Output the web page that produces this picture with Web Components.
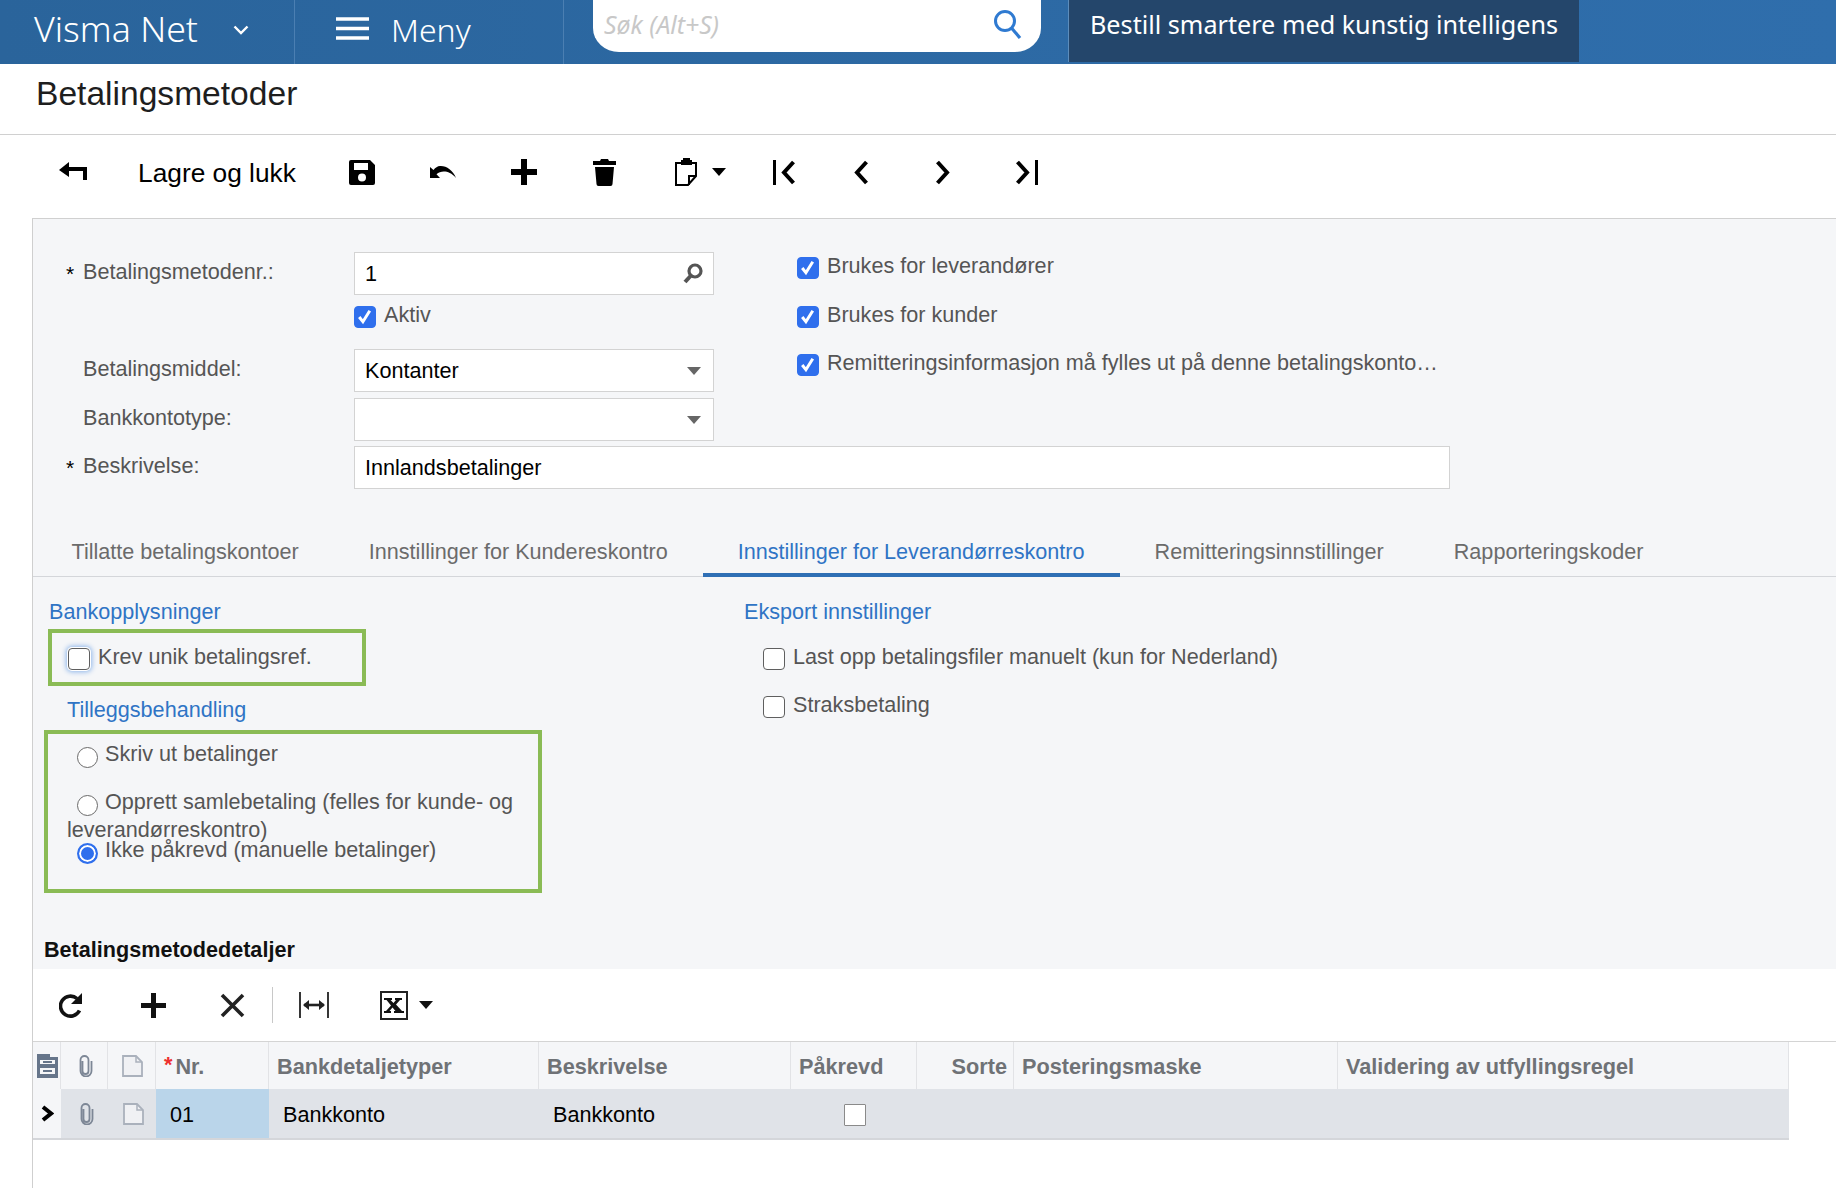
<!DOCTYPE html>
<html lang="no">
<head>
<meta charset="utf-8">
<title>Betalingsmetoder</title>
<style>
  html, body { margin: 0; padding: 0; background: #fff; }
  body { width: 1836px; height: 1188px; overflow: hidden; font-family: "Liberation Sans", Arial, sans-serif; font-size: 21.6px; }
</style>
</head>
<body>
<visma-header></visma-header>
<page-title>Betalingsmetoder</page-title>
<main-toolbar></main-toolbar>
<screen-body>
  <form-panel></form-panel>
  <tab-bar></tab-bar>
  <detail-section></detail-section>
  <grid-toolbar></grid-toolbar>
  <data-grid></data-grid>
</screen-body>

<script>
class VismaHeader extends HTMLElement {
    connectedCallback() {
        this.attachShadow({ mode: 'open' });
        this.shadowRoot.innerHTML = `
            <style>
                :host {
                    display: flex;
                    height: 64px;
                    background: linear-gradient(90deg, #2a649b, #2f6eac);
                    color: #fff;
                    font-family: "Noto Sans", sans-serif;
                }
                .cell { display: flex; align-items: center; border-right: 1px solid #4b7fb2; }
                .brand { width: 295px; padding-left: 34px; box-sizing: border-box; font-size: 35.700px; font-weight: 300; white-space: nowrap; }
                .brand span { margin-top: -9px; }
                .brand svg { margin-left: 35px; margin-top: -4px; }
                .menu { width: 269px; padding-left: 41px; box-sizing: border-box; font-size: 32px; font-weight: 300; }
                .menu svg { margin-right: 22px; margin-top: -7px; }
                .menu span { margin-top: -5px; }
                .search {
                    margin: 0 27px 12px 29px;
                    width: 448px;
                    height: 52px;
                    background: #fff;
                    border-radius: 0 0 26px 26px / 0 0 24px 24px;
                    display: flex;
                    align-items: center;
                    justify-content: space-between;
                    padding: 0 18px 0 11px;
                    box-sizing: border-box;
                    color: #c8c8c8;
                    font-style: italic;
                    font-size: 24.800px;
                }
                .search span { margin-top: -4px; }
                .search svg { margin-top: -4px; }
                .promo {
                    height: 62px;
                    background: #24466b;
                    border-left: 1px solid #5d8dbb;
                    padding: 0 21px;
                    font-size: 25.200px;
                    line-height: 48px;
                    white-space: nowrap;
                }
            </style>
            <div class="cell brand"><span>Visma Net</span>
                <svg width="16" height="10" viewBox="0 0 16 10"><path d="M1.500 1.500 8 8l6.500-6.500" fill="none" stroke="#fff" stroke-width="2.400"/></svg>
            </div>
            <div class="cell menu">
                <svg width="33" height="23" viewBox="0 0 33 23"><path d="M0 2h33M0 11.500h33M0 21h33" stroke="#fff" stroke-width="3.400"/></svg>
                <span>Meny</span>
            </div>
            <div class="search">
                <span>Søk (Alt+S)</span>
                <svg width="30" height="30" viewBox="0 0 30 30"><circle cx="12" cy="12" r="9.500" fill="none" stroke="#2f7ad1" stroke-width="3"/><path d="M18.500 19 27 29" stroke="#2f7ad1" stroke-width="3.200"/></svg>
            </div>
            <div class="promo">Bestill smartere med kunstig intelligens</div>
        `;
    }
}

class PageTitle extends HTMLElement {
    connectedCallback() {
        this.attachShadow({ mode: 'open' });
        this.shadowRoot.innerHTML = `
            <style>
                :host {
                    display: block;
                    height: 71px;
                    box-sizing: border-box;
                    padding: 10px 0 0 36px;
                    border-bottom: 1px solid #d0d0d0;
                    font-size: 33.600px;
                    line-height: 40px;
                    color: #1e1e1e;
                }
            </style>
            <slot></slot>
        `;
    }
}

class MainToolbar extends HTMLElement {
    connectedCallback() {
        this.attachShadow({ mode: 'open' });
        this.shadowRoot.innerHTML = `
            <style>
                :host {
                    display: flex;
                    align-items: center;
                    height: 83px;
                    padding: 0 0 9px 59px;
                    box-sizing: border-box;
                    color: #000;
                }
                svg { display: block; flex: none; }
                .save-close { margin: 2px 53px 0 51px; font-size: 26.300px; white-space: nowrap; }
            </style>
            <svg width="28" height="20" viewBox="0 0 28 20"><path d="M0 8 10 0v5h18v13h-4V9H10v6z"/></svg>
            <span class="save-close">Lagre og lukk</span>
            <svg width="26" height="25" viewBox="0 0 26 25"><path fill-rule="evenodd" d="M2 0h19l5 5v18a2 2 0 0 1-2 2H2a2 2 0 0 1-2-2V2a2 2 0 0 1 2-2zM5 3v7h14V3zM13 13.500a4 4 0 1 0 0 8 4 4 0 0 0 0-8z"/></svg>
            <svg style="margin-left:54px" width="28" height="16" viewBox="0 0 28 16"><path d="M1 3v11h10l-3.500-3.800C12 6.500 20 6 27 14 24 6 17 1.500 11 2 8.500 2.200 6.500 3.500 4.500 6z"/></svg>
            <svg style="margin-left:54px" width="26" height="26" viewBox="0 0 26 26"><path d="M10 0h6v10h10v6H16v10h-6V16H0v-6h10z"/></svg>
            <svg style="margin-left:56px" width="23" height="27" viewBox="0 0 23 27"><path d="M8 0h7l1 2h7v4H0V2h7zM2 8h19l-1.500 17a2 2 0 0 1-2 2h-12a2 2 0 0 1-2-2z"/></svg>
            <svg style="margin-left:59px" width="23" height="28" viewBox="0 0 23 28"><path fill="none" stroke="#000" stroke-width="2" d="M6 5H1v22h12l8-9V5h-4M14 27v-9h7"/><path d="M8 2V0h7v2h2v5H6V2z"/></svg>
            <svg style="margin-left:14px" width="14" height="8" viewBox="0 0 14 8"><path d="M0 0h14L7 8z"/></svg>
            <svg style="margin-left:47px" width="23" height="25" viewBox="0 0 23 25"><path d="M1.500 0v25" stroke="#000" stroke-width="3"/><path fill="none" stroke="#000" stroke-width="4" d="M20.500 2 11 12.500 20.500 23"/></svg>
            <svg style="margin-left:57px" width="16" height="25" viewBox="0 0 16 25"><path fill="none" stroke="#000" stroke-width="4" d="M13.500 2 4 12.500 13.500 23"/></svg>
            <svg style="margin-left:66px" width="16" height="25" viewBox="0 0 16 25"><path fill="none" stroke="#000" stroke-width="4" d="M2.500 2 12 12.500 2.500 23"/></svg>
            <svg style="margin-left:64px" width="23" height="25" viewBox="0 0 23 25"><path d="M21.500 0v25" stroke="#000" stroke-width="3"/><path fill="none" stroke="#000" stroke-width="4" d="M2.500 2 12 12.500 2.500 23"/></svg>
        `;
    }
}

class ScreenBody extends HTMLElement {
    connectedCallback() {
        this.attachShadow({ mode: 'open' });
        this.shadowRoot.innerHTML = `
            <style>
                :host {
                    display: block;
                    margin-left: 32px;
                    border-left: 1px solid #cfcfcf;
                    border-top: 1px solid #d0d0d0;
                    height: 970px;
                    background: #fff;
                }
            </style>
            <slot></slot>
        `;
    }
}

// small tick box, unchecked / checked / focused come from attributes
class TickBox extends HTMLElement {
    connectedCallback() {
        this.attachShadow({ mode: 'open' });
        const on = this.hasAttribute('checked');
        this.shadowRoot.innerHTML = `
            <style>
                :host {
                    display: inline-block;
                    width: 22px;
                    height: 22px;
                    box-sizing: border-box;
                    border-radius: 4px;
                    border: 1.500px solid #5f5f5f;
                    background: #fff;
                    vertical-align: -6px;
                    flex: none;
                }
                :host([checked]) { background: #2f6fed; border-color: #2f6fed; }
                :host([focused]) { box-shadow: 0 0 0 1px #fff, 0 0 5px 2px #8db5ea; }
                svg { display: block; }
            </style>
            ${on ? '<svg width="19" height="19" viewBox="0 0 18 18"><path d="M4 9.500 7.500 14 14 3.500" fill="none" stroke="#fff" stroke-width="2.800"/></svg>' : ''}
        `;
    }
}

class RadioDot extends HTMLElement {
    connectedCallback() {
        this.attachShadow({ mode: 'open' });
        this.shadowRoot.innerHTML = `
            <style>
                :host {
                    display: inline-block;
                    width: 21px;
                    height: 21px;
                    box-sizing: border-box;
                    border-radius: 50%;
                    border: 1.500px solid #6a6a6a;
                    background: #fff;
                    vertical-align: -7px;
                }
                :host([checked]) {
                    border: 2px solid #2f6fed;
                    background: #2f6fed;
                    box-shadow: inset 0 0 0 2px #fff;
                }
            </style>
        `;
    }
}

class FormRow extends HTMLElement {
    connectedCallback() {
        this.attachShadow({ mode: 'open' });
        const req = this.hasAttribute('required');
        this.shadowRoot.innerHTML = `
            <style>
                :host { display: flex; align-items: flex-start; color: #555; }
                .star { width: 17px; margin-left: 33px; color: #000; font-size: 21px; line-height: 39px; margin-top: 2px; }
                .label { width: 271px; line-height: 39px; }
            </style>
            <span class="star">${req ? '*' : ''}</span>
            <span class="label">${this.getAttribute('label')}</span>
            <slot></slot>
        `;
    }
}

class TextBox extends HTMLElement {
    connectedCallback() {
        this.attachShadow({ mode: 'open' });
        const kind = this.getAttribute('kind');
        let icon = '';
        if (kind === 'lookup') icon = '<svg style="margin-right:-2px" width="20" height="21" viewBox="0 0 20 21"><circle cx="12" cy="8" r="6" fill="none" stroke="#555" stroke-width="3.200"/><path d="M8 12.500 2 19" stroke="#555" stroke-width="4"/></svg>';
        if (kind === 'select') icon = '<svg width="14" height="8" viewBox="0 0 14 8"><path d="M0 0h14L7 8z" fill="#666"/></svg>';
        this.shadowRoot.innerHTML = `
            <style>
                :host {
                    display: flex;
                    align-items: center;
                    box-sizing: border-box;
                    width: var(--box-width, 360px);
                    height: 43px;
                    padding: 0 12px 0 10px;
                    background: #fff;
                    border: 1px solid #d3d3d3;
                    color: #000;
                }
                svg { margin-left: auto; }
            </style>
            <slot></slot>${icon}
        `;
    }
}

class FormPanel extends HTMLElement {
    connectedCallback() {
        this.attachShadow({ mode: 'open' });
        this.shadowRoot.innerHTML = `
            <style>
                :host {
                    display: block;
                    height: 300px;
                    box-sizing: border-box;
                    padding-top: 33px;
                    background: #f5f6f8;
                }
                .cols { display: grid; grid-template-columns: 764px 1fr; height: 145px; }
                .left { display: flex; flex-direction: column; }
                .aktiv { margin: 7px 0 0 321px; height: 47px; color: #555; }
                .aktiv span { margin-left: 8px; }
                .second { margin-top: 6px; }
                .flags { display: flex; flex-direction: column; color: #555; margin-top: -4px; }
                .flags div { height: 48.500px; line-height: 36px; white-space: nowrap; }
                .flags span { margin-left: 8px; }
                .desc { --box-width: 1096px; margin-top: 49px; }
                form-row { height: 43px; }
            </style>
            <div class="cols">
                <div class="left">
                    <form-row required label="Betalingsmetodenr.:"><text-box kind="lookup">1</text-box></form-row>
                    <div class="aktiv"><tick-box checked></tick-box><span>Aktiv</span></div>
                    <form-row label="Betalingsmiddel:"><text-box kind="select">Kontanter</text-box></form-row>
                    <form-row class="second" label="Bankkontotype:"><text-box kind="select"></text-box></form-row>
                </div>
                <div class="flags">
                    <div><tick-box checked></tick-box><span>Brukes for leverandører</span></div>
                    <div><tick-box checked></tick-box><span>Brukes for kunder</span></div>
                    <div><tick-box checked></tick-box><span>Remitteringsinformasjon må fylles ut på denne betalingskonto…</span></div>
                </div>
            </div>
            <form-row class="desc" required label="Beskrivelse:"><text-box>Innlandsbetalinger</text-box></form-row>
        `;
    }
}

class TabBar extends HTMLElement {
    connectedCallback() {
        this.attachShadow({ mode: 'open' });
        const tabs = ['Tillatte betalingskontoer', 'Innstillinger for Kundereskontro', 'Innstillinger for Leverandørreskontro', 'Remitteringsinnstillinger', 'Rapporteringskoder'];
        this.shadowRoot.innerHTML = `
            <style>
                :host {
                    display: flex;
                    height: 58px;
                    box-sizing: border-box;
                    padding-left: 3.500px;
                    background: #f5f6f8;
                    border-bottom: 1px solid #d4d6da;
                    color: #6b6b6b;
                }
                .tab {
                    padding: 0 35px;
                    line-height: 66px;
                    height: 58px;
                    box-sizing: border-box;
                    white-space: nowrap;
                }
                .on { color: #2f74c5; border-bottom: 4px solid #2f6fb5; }
            </style>
            ${tabs.map((t, i) => `<div class="tab ${i === 2 ? 'on' : ''}">${t}</div>`).join('')}
        `;
    }
}

class DetailSection extends HTMLElement {
    connectedCallback() {
        this.attachShadow({ mode: 'open' });
        this.shadowRoot.innerHTML = `
            <style>
                :host {
                    display: flex;
                    flex-direction: column;
                    background: #f5f6f8;
                    height: 392px;
                    box-sizing: border-box;
                    color: #555;
                }
                .cols { display: grid; grid-template-columns: 710px 1fr; }
                h3 { margin: 0; font-weight: normal; font-size: 21.600px; line-height: 26px; color: #2f74c5; }
                .bank h3 { margin: 21.500px 0 0 16px; }
                .green { border: 4.500px solid #8abb55; box-sizing: border-box; }
                .g1 { margin: 4px 0 0 15px; width: 318px; height: 57px; padding: 10px 0 0 16px; line-height: 28px; white-space: nowrap; }
                .g1 span { margin-left: 8px; }
                .bank .till { margin: 11px 0 0 34px; }
                .g2 { margin: 7px 0 0 11px; width: 498px; height: 163px; padding: 6px 18px 0 19px; line-height: 28px; }
                radio-dot { margin-left: 10px; margin-right: 7px; }
                .o2 { margin-top: 20px; }
                .o3 { margin-top: -8px; }
                .exp h3 { margin: 21.500px 0 0 1px; }
                .exp .line { margin: 18px 0 0 20px; height: 48.500px; line-height: 28px; white-space: nowrap; }
                .exp .line + .line { margin-top: 0; }
                .exp span { margin-left: 8px; }
                .head {
                    margin: auto 0 6.500px 11px;
                    font-weight: bold;
                    color: #111;
                }
            </style>
            <div class="cols">
                <div class="bank">
                    <h3>Bankopplysninger</h3>
                    <div class="green g1"><tick-box focused></tick-box><span>Krev unik betalingsref.</span></div>
                    <h3 class="till">Tilleggsbehandling</h3>
                    <div class="green g2">
                        <div><radio-dot></radio-dot>Skriv ut betalinger</div>
                        <div class="o2"><radio-dot></radio-dot>Opprett samlebetaling (felles for kunde- og leverandørreskontro)</div>
                        <div class="o3"><radio-dot checked></radio-dot>Ikke påkrevd (manuelle betalinger)</div>
                    </div>
                </div>
                <div class="exp">
                    <h3>Eksport innstillinger</h3>
                    <div class="line"><tick-box></tick-box><span>Last opp betalingsfiler manuelt (kun for Nederland)</span></div>
                    <div class="line"><tick-box></tick-box><span>Straksbetaling</span></div>
                </div>
            </div>
            <div class="head">Betalingsmetodedetaljer</div>
        `;
    }
}

class GridToolbar extends HTMLElement {
    connectedCallback() {
        this.attachShadow({ mode: 'open' });
        this.shadowRoot.innerHTML = `
            <style>
                :host {
                    display: flex;
                    align-items: center;
                    height: 73px;
                    box-sizing: border-box;
                    padding-left: 26px;
                    background: #fff;
                    border-bottom: 1px solid #d4d4d4;
                    margin-bottom: -1px;
                }
                svg { display: block; flex: none; }
                .sep { width: 1px; height: 36px; background: #c8c8c8; margin: 0 26px 0 27px; }
            </style>
            <svg width="24" height="25" viewBox="0 0 24 25"><path fill="none" stroke="#111" stroke-width="3.600" d="M20.500 17.500A10 10 0 1 1 18 5.500"/><path d="M23 0v11H12z" fill="#111"/></svg>
            <svg style="margin-left:58px" width="25" height="25" viewBox="0 0 25 25"><path d="M10 0h5v10h10v5H15v10h-5V15H0v-5h10z" fill="#111"/></svg>
            <svg style="margin-left:54px" width="25" height="25" viewBox="0 0 25 25"><path d="M2 2l21 21M23 2 2 23" stroke="#222" stroke-width="3.600"/></svg>
            <span class="sep"></span>
            <svg width="30" height="26" viewBox="0 0 30 26"><path d="M1 0v26M29 0v26" stroke="#222" stroke-width="1.800"/><path d="M5 13h20" stroke="#222" stroke-width="2.600"/><path d="M4 13l6-5v10zM26 13l-6-5v10z" fill="#222"/></svg>
            <svg style="margin-left:51px" width="28" height="29" viewBox="0 0 28 29"><rect x="1" y="1" width="26" height="27" fill="#fff" stroke="#222" stroke-width="2"/><path d="M4 7h8v2h-1.500l3 3 2.500-3h-1V7h7v2h-2l-4 4.500L22 20h2v2h-10v-2h1.500l-3-3.500-3 3.500h1.500v2H4v-2h2l5-5.500L6.500 9H4z" fill="#111"/></svg>
            <svg style="margin-left:11px" width="14" height="8" viewBox="0 0 14 8"><path d="M0 0h14L7 8z" fill="#111"/></svg>
        `;
    }
}

class DataGrid extends HTMLElement {
    connectedCallback() {
        this.attachShadow({ mode: 'open' });
        const clip = '<svg width="17" height="22" viewBox="0 0 16 22"><path fill="none" stroke="#7d8796" stroke-width="1.800" d="M5 6v10a3 3 0 0 0 6 0V5a4 4 0 0 0-8 0v11a5.500 5.500 0 0 0 11 0V6"/></svg>';
        const page = '<svg width="21" height="22" viewBox="0 0 21 22"><path fill="#f0f1f4" stroke="#aab1bc" stroke-width="1.800" d="M1 1h13l6 6v14H1z"/><path fill="none" stroke="#aab1bc" stroke-width="1.500" d="M14 1v6h6"/></svg>';
        const cols = '28px 47px 48px 113px 270px 252px 126px 97px 324px 451px';
        this.shadowRoot.innerHTML = `
            <style>
                :host { display: block; width: 1756px; color: #000; }
                .row { display: grid; grid-template-columns: ${cols}; height: 48px; }
                .head { background: #f5f6f8; border-top: 1px solid #d4d4d4; height: 48px; box-sizing: border-box; }
                .head div {
                    display: flex; align-items: center; padding: 3px 0 0 8px; box-sizing: border-box;
                    border-right: 1px solid #e2e3e6; font-weight: bold; color: #6f7276; white-space: nowrap;
                    font-size: 21.700px;
                }
                .head .ico { justify-content: center; padding: 0 0 0 2px; }
                .head .right { justify-content: flex-end; padding-right: 6px; }
                .req { color: #ee2f2f; margin-right: 3px; margin-top: -4px; }
                .body { height: 51px; border-bottom: 2px solid #d4d6da; background: #e0e3e8; box-sizing: border-box; }
                .body div { display: flex; align-items: center; padding: 2px 0 0 14px; box-sizing: border-box; }
                .body .ico { justify-content: center; padding: 0 0 0 3px; }
                .body .mark { background: #f5f6f8; padding: 0; }
                .body .sel { background: #bad5ea; }
                .box { border-radius: 1px; border-color: #8a8a8a; }
            </style>
            <div class="row head">
                <div class="ico"><svg width="21" height="24" viewBox="0 0 21 24"><path fill-rule="evenodd" d="M0 0h13v3h8v21H0zM3 6v4h15V6zM3 14v6h15v-6z" fill="#66758a"/><path d="M2 2h9v1H2zM6 7h9v2H6zM6 16h9v2H6z" fill="#66758a"/></svg></div>
                <div class="ico">${clip}</div>
                <div class="ico">${page}</div>
                <div><span class="req">*</span>Nr.</div>
                <div>Bankdetaljetyper</div>
                <div>Beskrivelse</div>
                <div>Påkrevd</div>
                <div class="right">Sorte</div>
                <div>Posteringsmaske</div>
                <div>Validering av utfyllingsregel</div>
            </div>
            <div class="row body">
                <div class="ico mark"><svg width="13" height="17" viewBox="0 0 13 17"><path d="M2 2l8 6.500-8 6.500" fill="none" stroke="#000" stroke-width="4"/></svg></div>
                <div class="ico">${clip}</div>
                <div class="ico">${page}</div>
                <div class="sel">01</div>
                <div>Bankkonto</div>
                <div>Bankkonto</div>
                <div style="padding-left:53px"><tick-box class="box"></tick-box></div>
                <div></div><div></div><div></div>
            </div>
        `;
    }
}

customElements.define('visma-header', VismaHeader);
customElements.define('page-title', PageTitle);
customElements.define('main-toolbar', MainToolbar);
customElements.define('screen-body', ScreenBody);
customElements.define('tick-box', TickBox);
customElements.define('radio-dot', RadioDot);
customElements.define('form-row', FormRow);
customElements.define('text-box', TextBox);
customElements.define('form-panel', FormPanel);
customElements.define('tab-bar', TabBar);
customElements.define('detail-section', DetailSection);
customElements.define('grid-toolbar', GridToolbar);
customElements.define('data-grid', DataGrid);
</script>
</body>
</html>
